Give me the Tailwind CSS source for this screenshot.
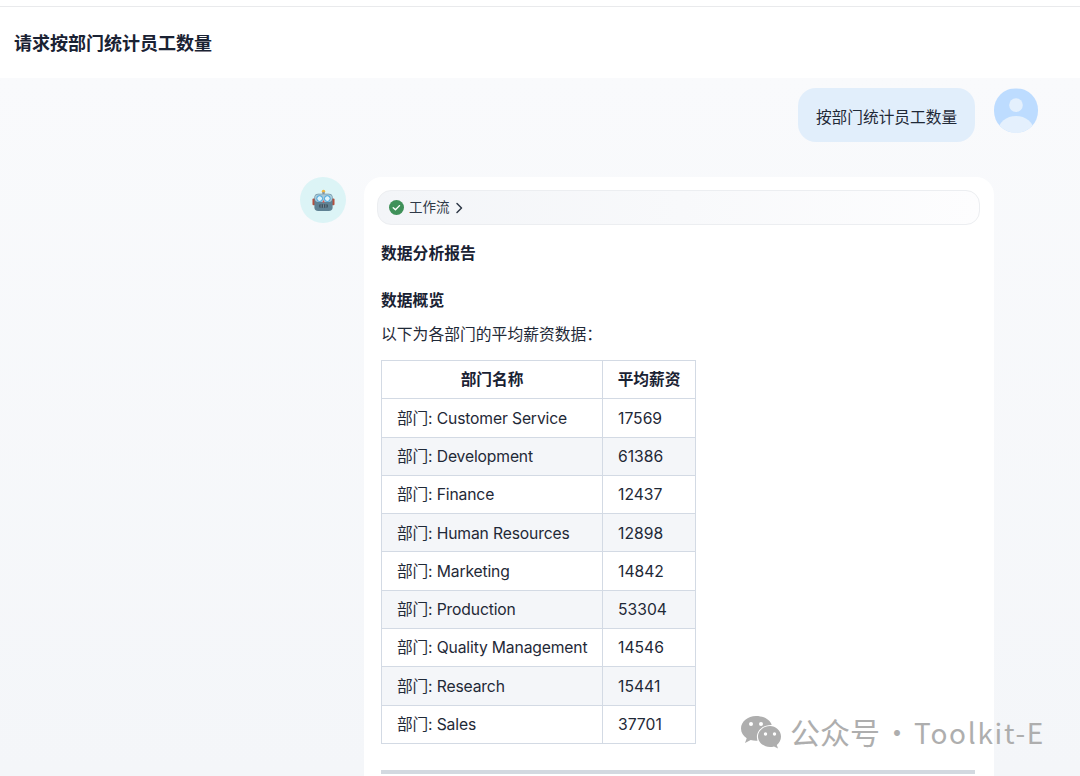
<!DOCTYPE html>
<html lang="zh-CN">
<head>
    <meta charset="UTF-8">
    <meta name="viewport" content="width=device-width, initial-scale=1.0">
    <title>请求按部门统计员工数量</title>
    <script src="https://cdn.jsdelivr.net/npm/@tailwindcss/browser@4"></script>
</head>
<body class="relative h-[776px] overflow-hidden bg-white font-['Inter','Noto_Sans_CJK_SC',sans-serif] text-[#1f2937]">

<header class="h-[78px] pt-[6px]">
    <div class="flex h-[72px] items-center border-t border-[#e9eaec] pt-[1px] pl-[14px]">
        <h1 class="text-[18px] font-semibold text-[#1a2233]">请求按部门统计员工数量</h1>
    </div>
</header>

<main class="h-[698px] overflow-hidden bg-gradient-to-b from-[#f9fafc] to-[#f4f6f9] pt-[10px]">
    <!-- user message -->
    <div class="flex justify-end gap-[19px] pr-[42px]">
        <div class="flex h-[54px] w-[177px] items-center justify-center rounded-[18px] bg-[#e1eefb] pt-[5px] text-[15.7px] text-[#1f2937]">按部门统计员工数量</div>
        <div class="h-[45px] w-[44px] overflow-hidden rounded-full">
            <svg viewBox="0 0 45 45" class="h-full w-full">
                <rect width="45" height="45" fill="#bddcff"/>
                <circle cx="22.5" cy="17" r="7" fill="#e4f0fd"/>
                <ellipse cx="22.5" cy="43" rx="18" ry="15" fill="#e4f0fd"/>
            </svg>
        </div>
    </div>

    <!-- bot message -->
    <div class="mt-[35px] flex pl-[300px]">
        <div class="mr-[18px] flex h-[46px] w-[46px] items-center justify-center rounded-full bg-[#dcf4f6]">
            <svg viewBox="0 0 24 24" class="h-[23px] w-[23px]">
                <circle cx="12" cy="2.5" r="1.8" fill="#f6b73c"/>
                <rect x="10.8" y="3" width="2.4" height="3" fill="#8a9aa5"/>
                <rect x="0.5" y="10" width="3" height="7" rx="1" fill="#b5503f"/>
                <rect x="20.5" y="10" width="3" height="7" rx="1" fill="#b5503f"/>
                <rect x="2.5" y="5" width="19" height="18" rx="4" fill="#5f8294"/>
                <rect x="3" y="5.5" width="18" height="8" rx="3.5" fill="#a9c8d6"/>
                <circle cx="8" cy="10" r="3" fill="#dff3fb" stroke="#3aa0dc" stroke-width="1"/>
                <circle cx="16" cy="10" r="3" fill="#dff3fb" stroke="#3aa0dc" stroke-width="1"/>
                <path d="M12 11.5l1.3 2.5h-2.6z" fill="#d9534f"/>
                <rect x="7.5" y="16" width="9" height="3.5" rx="1" fill="#3c5260"/>
                <path d="M9.5 16v3.5M12 16v3.5M14.500 16v3.500" stroke="#9fb3bd" stroke-width=".6"/>
            </svg>
        </div>

        <article class="h-[620px] w-[630px] rounded-t-[18px] bg-white px-[13px] pt-[13px]">
            <div class="flex h-[35px] w-[603px] items-center rounded-[14px] border border-[#eceef1] bg-gradient-to-r from-[#f3f5f8] to-[#fdfdfe] pl-[11px] text-[13.500px] text-[#2f3947]">
                <svg viewBox="0 0 16 16" class="mr-[5px] h-[15px] w-[15px]">
                    <circle cx="8" cy="8" r="8" fill="#3f9159"/>
                    <path d="M4.500 8.200l2.400 2.300 4.300-4.500" fill="none" stroke="#fff" stroke-width="1.500" stroke-linecap="round" stroke-linejoin="round"/>
                </svg>
                <span>工作流</span>
                <svg viewBox="0 0 10 12" class="ml-[4px] h-[12px] w-[10px]">
                    <path d="M3 1.500L7.500 6 3 10.500" fill="none" stroke="#2f3947" stroke-width="1.500" stroke-linecap="round" stroke-linejoin="round"/>
                </svg>
            </div>

            <div class="px-[4px]">
                <h2 class="mt-[17px] text-[15.800px] leading-[24px] font-semibold text-[#1a2233]">数据分析报告</h2>
                <h3 class="mt-[23px] text-[15.800px] leading-[24px] font-semibold text-[#1a2233]">数据概览</h3>
                <p class="mt-[10px] text-[15.800px] leading-[24px]">以下为各部门的平均薪资数据：</p>

                <table class="mt-[13px] w-[315px] border-collapse text-[15.700px] text-[#1f2937]">
                    <thead>
                        <tr class="h-[38.300px]">
                            <th class="w-[221px] border border-[#d3dae4] pt-[1px] font-semibold text-[#1a2233]">部门名称</th>
                            <th class="border border-[#d3dae4] pt-[1px] font-semibold text-[#1a2233]">平均薪资</th>
                        </tr>
                    </thead>
                    <tbody>
                        <tr class="h-[38.300px]"><td class="border border-[#d3dae4] pt-[1px] pl-[15px] tracking-[-0.15px]">部门: Customer Service</td><td class="border border-[#d3dae4] pt-[1px] pl-[15px]">17569</td></tr>
                        <tr class="h-[38.300px] bg-[#f4f6f9]"><td class="border border-[#d3dae4] pt-[1px] pl-[15px] tracking-[-0.15px]">部门: Development</td><td class="border border-[#d3dae4] pt-[1px] pl-[15px]">61386</td></tr>
                        <tr class="h-[38.300px]"><td class="border border-[#d3dae4] pt-[1px] pl-[15px] tracking-[-0.15px]">部门: Finance</td><td class="border border-[#d3dae4] pt-[1px] pl-[15px]">12437</td></tr>
                        <tr class="h-[38.300px] bg-[#f4f6f9]"><td class="border border-[#d3dae4] pt-[1px] pl-[15px] tracking-[-0.15px]">部门: Human Resources</td><td class="border border-[#d3dae4] pt-[1px] pl-[15px]">12898</td></tr>
                        <tr class="h-[38.300px]"><td class="border border-[#d3dae4] pt-[1px] pl-[15px] tracking-[-0.15px]">部门: Marketing</td><td class="border border-[#d3dae4] pt-[1px] pl-[15px]">14842</td></tr>
                        <tr class="h-[38.300px] bg-[#f4f6f9]"><td class="border border-[#d3dae4] pt-[1px] pl-[15px] tracking-[-0.15px]">部门: Production</td><td class="border border-[#d3dae4] pt-[1px] pl-[15px]">53304</td></tr>
                        <tr class="h-[38.300px]"><td class="border border-[#d3dae4] pt-[1px] pl-[15px] tracking-[-0.15px]">部门: Quality Management</td><td class="border border-[#d3dae4] pt-[1px] pl-[15px]">14546</td></tr>
                        <tr class="h-[38.300px] bg-[#f4f6f9]"><td class="border border-[#d3dae4] pt-[1px] pl-[15px] tracking-[-0.15px]">部门: Research</td><td class="border border-[#d3dae4] pt-[1px] pl-[15px]">15441</td></tr>
                        <tr class="h-[38.300px]"><td class="border border-[#d3dae4] pt-[1px] pl-[15px] tracking-[-0.15px]">部门: Sales</td><td class="border border-[#d3dae4] pt-[1px] pl-[15px]">37701</td></tr>
                    </tbody>
                </table>

                <div class="mt-[26px] h-[4px] w-[594px] bg-[#d3d9e0]"></div>
            </div>
        </article>
    </div>
</main>

<!-- watermark -->
<div class="absolute top-[711px] left-[740px] flex items-center gap-[8px] text-[#aeaeae]">
    <svg viewBox="0 0 42 34" class="h-[34px] w-[42px]">
        <path d="M16 1C7.700 1 1 6.600 1 13.500c0 4 2.200 7.400 5.700 9.700L5 28l5.700-3c1.700.5 3.400.8 5.300.8.500 0 1 0 1.500-.1-.4-1.200-.6-2.400-.6-3.700C16.900 15.500 23 10 31 10c.2 0 .5 0 .7 0C30.300 4.800 23.800 1 16 1z" fill="#aeaeae"/>
        <path d="M41 21.500c0-6-5.500-10.500-11-10.500-6.500 0-12 4.600-12 10.500S23.500 32 30 32c1.400 0 2.700-.2 4-.6l4 2.200-1.200-3.700c2.600-2 4.200-5 4.200-8.400z" fill="#aeaeae"/>
        <circle cx="11" cy="9" r="2" fill="#fff"/>
        <circle cx="21" cy="9" r="2" fill="#fff"/>
        <circle cx="25.500" cy="19" r="1.700" fill="#fff"/>
        <circle cx="34.500" cy="19" r="1.700" fill="#fff"/>
    </svg>
    <div class="flex items-baseline font-['Noto_Sans_CJK_SC','Noto_Sans',sans-serif] leading-[40px] whitespace-nowrap">
        <span class="text-[30px]">公众号</span>
        <span class="w-[34px] text-center text-[28px]">·</span>
        <span class="text-[28px] tracking-[1.700px]">Toolkit-E</span>
    </div>
</div>

</body>
</html>
